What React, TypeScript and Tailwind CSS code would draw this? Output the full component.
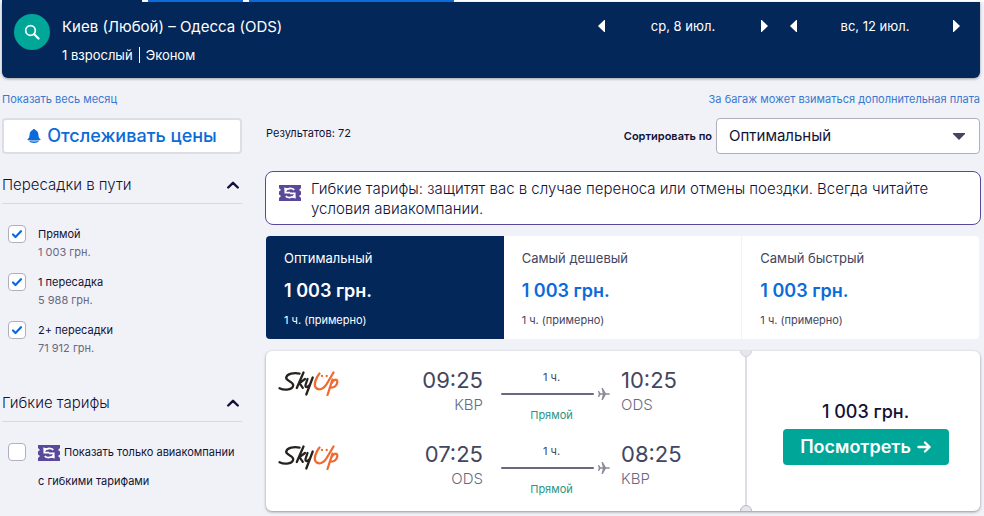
import React from "react";

function Ticket({ className = "" }: { className?: string }) {
  return (
    <svg viewBox="0 0 22 16" className={"h-4 w-[22px] shrink-0 " + className} aria-hidden="true">
      <path d="M0 0h22v3l-2 2 2 1.500v3l-2 1.500 2 2v3H0v-3l2-2-2-1.500v-3L2 5 0 3z" fill="#5a489b" />
      <path d="M5 2.500 10 3.500 6.500 7z M17 13.500l-5-1 3.500-3.500z" fill="#fff" />
      <path d="M8.500 4.200C11 3 14 3.300 15.200 5M6.300 4v3.700H11M13.500 11.800C11 13 8 12.700 6.800 11M15.700 12V8.300H11" fill="none" stroke="#fff" strokeWidth="1.700" />
    </svg>
  );
}

function SkyUp() {
  return (
    <svg viewBox="0 0 62 27" className="h-[27px] w-[62px]" role="img" aria-label="SkyUp" fill="none" strokeLinecap="round" strokeLinejoin="round">
      <g stroke="#26231f" strokeWidth="2.300">
        <path d="M21.500 3.600C16 2.300 9 3.800 8.200 7.500c-.6 3.500 7.300 3.800 7 7.800-.4 4.200-8 5.700-13.700 2.900" />
        <path d="M25.500 2.500 18.800 18M27 9l-5.500 4.200 3.300 4.600" />
        <path d="M29.500 9 27.500 15c-.5 3 3 2.800 5-1.500M34.700 7.500 28.300 24.500" />
      </g>
      <g stroke="#ef6b33" strokeWidth="2.300">
        <path d="M41.500 3.500C38 7.500 35.500 14.500 37.700 17.500c3 3.700 8.300 1.500 11-3.500L55.500 2.500" />
        <path d="M54.500 9.500 49.500 25M53.700 13c1.300-3.500 6-4.700 5.600-.8-.3 3.500-3.300 6-7.300 5.300" />
        <path d="M44 6h.01M48.700 6h.01" />
      </g>
    </svg>
  );
}

function DateStepper({ label }: { label: string }) {
  return (
    <div className="flex h-6 w-[170px] items-center justify-between">
      <button aria-label="Предыдущий день" className="flex h-5 w-2 items-center">
        <svg viewBox="0 0 7 12" className="h-3 w-[7px]"><path d="M7 0v12h-.8L0 6 6.200 0z" fill="#fff" /></svg>
      </button>
      <span className="text-[13px] leading-6">{label}</span>
      <button aria-label="Следующий день" className="flex h-5 w-2 items-center justify-end">
        <svg viewBox="0 0 7 12" className="h-3 w-[7px]"><path d="M0 0v12h.8L7 6 .8 0z" fill="#fff" /></svg>
      </button>
    </div>
  );
}

function FilterHeader({ title }: { title: string }) {
  return (
    <h2 className="border-b border-[#d8d8e0]">
      <button className="flex h-9 w-full items-center justify-between pr-[3px] text-left text-[15px] font-light">
        {title}
        <svg viewBox="0 0 12 8" className="h-2 w-3" fill="none" stroke="#111236" strokeWidth="2.400" strokeLinecap="round" strokeLinejoin="round"><path d="M1.200 6.500 6 1.800l4.800 4.700" /></svg>
      </button>
    </h2>
  );
}

function Check({ id, defaultChecked = false }: { id: string; defaultChecked?: boolean }) {
  return (
    <span className="grid size-[18px] shrink-0">
      <input id={id} type="checkbox" defaultChecked={defaultChecked} className="peer col-start-1 row-start-1 size-[18px] appearance-none rounded-[4px] border border-[#b2aebd] bg-white" />
      <svg viewBox="0 0 18 18" className="pointer-events-none invisible col-start-1 row-start-1 size-[18px] peer-checked:visible" fill="none" stroke="#0c6bd8" strokeWidth="2.200" strokeLinecap="round" strokeLinejoin="round"><path d="m5 9.500 2.500 2.500L13 6.200" /></svg>
    </span>
  );
}

const stops = [
  { id: "direct", label: "Прямой", price: "1 003 грн." },
  { id: "one", label: "1 пересадка", price: "5 988 грн." },
  { id: "two", label: "2+ пересадки", price: "71 912 грн." },
];

const sorts = ["Оптимальный", "Самый дешевый", "Самый быстрый"];

const tileStyles = [
  "bg-[#042759] text-white",
  "bg-white text-[#444560]",
  "border-l border-[#f1f2f8] bg-white text-[#444560]",
];

const legs = [
  { from: "KBP", dep: "09:25", to: "ODS", arr: "10:25" },
  { from: "ODS", dep: "07:25", to: "KBP", arr: "08:25" },
];

function Leg({ from, dep, to, arr }: (typeof legs)[number]) {
  return (
    <div className="flex h-[50px] items-start">
      <div className="pt-[2px]"><SkyUp /></div>
      <div className="ml-auto text-right">
        <div className="text-[22px] leading-6">{dep}</div>
        <div className="text-[15px] leading-[26px] font-light text-[#68697f]">{from}</div>
      </div>
      <div className="mx-[11px] w-[116px] pt-px pl-[7px] text-center text-[11px] leading-4">
        <div className="pr-2">1 ч.</div>
        <div className="flex h-[18px] items-center justify-between">
          <span className="h-[2px] w-[93px] rounded-full bg-[#68697f]" />
          <svg viewBox="0 0 12 12" className="size-3" fill="#8b8a9b"><path d="M0 3h1l1.500 2.200h2.300L3.500 0h1.300l3 5.200H11q2 .8 0 1.600H7.800l-3 5.200H3.500l1.300-5.200H2.500L1 9H0l.7-3z" /></svg>
        </div>
        <div className="pt-1 pr-2 text-[#2a9485]">Прямой</div>
      </div>
      <div className="w-[124px]">
        <div className="text-[22px] leading-6">{arr}</div>
        <div className="text-[15px] leading-[26px] font-light text-[#68697f]">{to}</div>
      </div>
    </div>
  );
}

export default function App() {
  return (
    <div className="min-h-screen bg-[#f1f2f8] pr-[3px] pl-[2px] font-['Inter','Liberation_Sans',sans-serif] text-[#111236]">
      <div className="-mr-[3px] flex h-[2px] gap-[6px] bg-white">
        <span className="w-[140px] bg-[#042759]" />
        <span className="w-[95px] bg-[#0c6bd8]" />
        <span className="w-[205px] bg-[#0c6bd8]" />
      </div>
      <header className="mr-px flex h-[76px] rounded-b-md bg-[#042759] text-white shadow-[0_1px_3px_rgba(0,0,0,0.35)]">
        <button aria-label="Изменить поиск" className="mt-3 ml-3 flex size-9 items-center justify-center rounded-full bg-[#00a698]">
          <svg viewBox="0 0 16 16" className="size-4" fill="none" stroke="#fff" strokeWidth="1.700" strokeLinecap="round"><circle cx="6.500" cy="6.500" r="4.800" /><path d="m10 10 4.500 4.500" strokeWidth="2.200" /></svg>
        </button>
        <div className="ml-3 pt-[13px]">
          <h1 className="text-[15px] leading-6">Киев (Любой) – Одесса (ODS)</h1>
          <div className="mt-[6px] flex h-5 items-center text-[13px] leading-5">
            <span>1 взрослый</span>
            <span className="mx-[6px] h-4 w-px bg-white" />
            <span>Эконом</span>
          </div>
        </div>
        <div className="mr-5 ml-auto flex gap-[22px] pt-3">
          <DateStepper label="ср, 8 июл." />
          <DateStepper label="вс, 12 июл." />
        </div>
      </header>
      <div className="mr-px flex justify-between pt-[13px] text-[11px] leading-4 text-[#3a78cf]">
        <a href="#month">Показать весь месяц</a>
        <a href="#baggage">За багаж может взиматься дополнительная плата</a>
      </div>
      <div className="flex pt-[11px]">
        <aside className="w-60 shrink-0">
          <button className="flex h-9 w-full items-center justify-center gap-[6px] rounded-[4px] border-2 border-[#dddde5] bg-white text-lg font-medium text-[#0c6bd8]">
            <svg viewBox="0 0 14 14" className="size-[14px]" fill="#0c6bd8"><path d="M7 0c.8 0 1.200.4 1.300 1 2 .6 3 2.300 3.100 4.500.1 2.500.8 3.800 1.900 4.600.7.5.3 1-.5 1.100-3.500.5-8.100.5-11.600 0-.8-.1-1.200-.6-.5-1.100 1.100-.8 1.800-2.100 1.900-4.600C2.700 3.300 3.700 1.600 5.700 1 5.800.4 6.200 0 7 0z" /><path d="M2 12c3.200.5 6.800.5 10 0-1.500 2.600-8.500 2.600-10 0z" /></svg>
            Отслеживать цены
          </button>
          <section className="mt-[13px]">
            <FilterHeader title="Пересадки в пути" />
            <div className="flex flex-col gap-3 pt-[21px] pl-[6px]">
              {stops.map((s) => (
                <div key={s.id} className="flex h-9 gap-3">
                  <Check id={s.id} defaultChecked />
                  <label htmlFor={s.id} className="text-[11px] leading-[18px]">
                    <span className="block">{s.label}</span>
                    <span className="block text-[#68697f]">{s.price}</span>
                  </label>
                </div>
              ))}
            </div>
          </section>
          <section className="mt-7">
            <FilterHeader title="Гибкие тарифы" />
            <div className="flex gap-3 pt-[21px] pl-[6px]">
              <Check id="flex" />
              <label htmlFor="flex" className="-mt-[5px] text-[11px] leading-[29px]">
                <span className="flex items-center gap-1 whitespace-nowrap"><Ticket />Показать только авиакомпании</span>
                <span className="block">с гибкими тарифами</span>
              </label>
            </div>
          </section>
        </aside>
        <main className="ml-[23px] min-w-0 flex-1">
          <div className="mr-px ml-px flex h-9 justify-between">
            <p className="pt-[7px] text-[11px] leading-4">Результатов: 72</p>
            <div className="flex items-center gap-1">
              <label htmlFor="sort" className="text-[11px] font-semibold">Сортировать по</label>
              <span className="grid w-[264px]">
                <select id="sort" className="col-start-1 row-start-1 h-9 appearance-none rounded-[4px] border border-[#b2aebd] bg-white px-3 text-[15px]">
                  {sorts.map((s) => <option key={s}>{s}</option>)}
                </select>
                <svg viewBox="0 0 12 7" className="pointer-events-none col-start-1 row-start-1 mr-[15px] h-[7px] w-3 self-center justify-self-end"><path d="M0 0h12v1L6 7 0 1z" fill="#444560" /></svg>
              </span>
            </div>
          </div>
          <div className="mt-[17px] flex h-[54px] gap-[10px] rounded-lg border border-[#5a489b] bg-white pl-[13px] text-[15px] leading-5 font-light">
            <Ticket className="mt-[13px]" />
            <p className="max-w-[640px] pt-[7px]">Гибкие тарифы: защитят вас в случае переноса или отмены поездки. Всегда читайте условия авиакомпании.</p>
          </div>
          <div className="mt-[11px] mr-[2px] ml-px grid h-[103px] grid-cols-3 overflow-hidden rounded-[4px]">
            {sorts.map((s, i) => (
              <button key={s} className={"flex flex-col items-start pt-3 pl-[18px] text-left " + tileStyles[i]}>
                <span className="text-[13px] leading-5">{s}</span>
                <span className={"mt-[11px] text-lg leading-6 font-semibold " + (i === 0 ? "" : "text-[#0c6bd8]")}>1 003 грн.</span>
                <span className="mt-[9px] text-[11px] leading-4">1 ч. (примерно)</span>
              </button>
            ))}
          </div>
          <article className="relative mt-3 mr-px ml-px flex h-40 overflow-hidden rounded-md bg-white shadow-[0_1px_3px_rgba(0,0,0,0.4)]">
            <div className="flex min-w-0 flex-1 flex-col gap-6 pt-[17px] pl-3 text-[#444560]">
              {legs.map((l) => <Leg key={l.dep} {...l} />)}
            </div>
            <div className="relative flex w-[235px] shrink-0 flex-col items-center border-l-2 border-[#dddde5] pt-[49px] pl-1">
              <span className="absolute -top-[6px] -left-[7px] size-3 rounded-full border border-[#d0d0da] bg-[#e6e6ee]" />
              <span className="absolute -bottom-[6px] -left-[7px] size-3 rounded-full border border-[#b8b8c2] bg-[#e6e6ee]" />
              <div className="text-lg leading-6 font-medium">1 003 грн.</div>
              <button className="mt-[5px] flex h-9 w-[166px] items-center justify-center gap-[6px] rounded-[4px] bg-[#00a698] text-lg font-semibold text-white">
                Посмотреть
                <svg viewBox="0 0 14 12" className="h-3 w-[14px]" fill="none" stroke="#fff" strokeWidth="2.400" strokeLinecap="round" strokeLinejoin="round"><path d="M1.500 6h11M8 1.500 12.500 6 8 10.500" /></svg>
              </button>
            </div>
          </article>
        </main>
      </div>
    </div>
  );
}
